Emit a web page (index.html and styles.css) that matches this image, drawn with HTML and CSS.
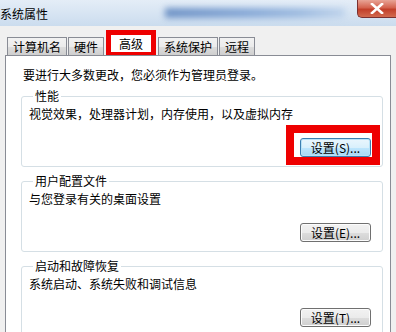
FILE: index.html
```html
<!DOCTYPE html>
<html>
   <head>
      <title>系统属性</title>
      <meta name="viewport" content="width=device-width, initial-scale=1">
      <link rel="stylesheet" href="styles.css">
   </head>
   <body>
      <div class="window">
         <div class="titlebar">
            <div class="title">系统属性</div>
            <div class="blur-text"></div>
            <button class="close-button">
               <svg width="14" height="11" viewBox="0 0 14 11">
                  <path d="M2 1 L12 10 M12 1 L2 10" stroke="#ffffff" stroke-width="2.6" stroke-linecap="square" fill="none"/>
               </svg>
            </button>
         </div>

         <div class="tabs">
            <div class="tab">计算机名</div>
            <div class="tab">硬件</div>
            <div class="tab tab-active"><span>高级</span></div>
            <div class="tab">系统保护</div>
            <div class="tab">远程</div>
         </div>

         <div class="panel">
            <p class="notice">要进行大多数更改，您必须作为管理员登录。</p>

            <fieldset class="group">
               <legend>性能</legend>
               <p class="desc">视觉效果，处理器计划，内存使用，以及虚拟内存</p>
               <div class="actions">
                  <div class="highlight">
                     <button class="btn btn-focus">设置(<u>S</u>)...</button>
                  </div>
               </div>
            </fieldset>

            <fieldset class="group">
               <legend>用户配置文件</legend>
               <p class="desc">与您登录有关的桌面设置</p>
               <div class="actions">
                  <button class="btn">设置(<u>E</u>)...</button>
               </div>
            </fieldset>

            <fieldset class="group">
               <legend>启动和故障恢复</legend>
               <p class="desc">系统启动、系统失败和调试信息</p>
               <div class="actions">
                  <button class="btn">设置(<u>T</u>)...</button>
               </div>
            </fieldset>
         </div>
      </div>
   </body>
</html>
```

FILE: styles.css
```css
body, html {
   margin: 0;
   height: 100%;
   overflow: hidden;
   background: #f0f0f0;
   font-family: "Noto Sans CJK SC", "Liberation Sans", sans-serif;
   font-size: 12px;
   color: #000;
}

.window {
   width: 396px;
   height: 332px;
   display: flex;
   flex-direction: column;
   overflow: hidden;
}

.titlebar {
   height: 26px;
   flex-shrink: 0;
   display: flex;
   align-items: flex-start;
   position: relative;
   background: linear-gradient(180deg, #e4edf7 0%, #d5e3f2 60%, #cbdcee 100%);
}

.title {
   padding-top: 6px;
   line-height: 16px;
   color: #000;
}

.blur-text {
   position: absolute;
   left: 165px;
   top: 8px;
   width: 180px;
   height: 10px;
   background: linear-gradient(90deg, #6f93c6 0%, #86a8d6 45%, #9dbbe0 75%, #c0d4ec 100%);
   filter: blur(3px);
}

.close-button {
   margin-left: auto;
   width: 39px;
   height: 18px;
   padding: 0;
   border: 1px solid #7a3030;
   border-top: none;
   border-right: none;
   border-radius: 0 0 0 5px;
   background: linear-gradient(180deg, #e8a496 0%, #d4634f 45%, #c23f2a 55%, #d26a4f 100%);
   display: flex;
   align-items: center;
   justify-content: center;
   position: relative;
   z-index: 1;
}

.tabs {
   display: flex;
   align-items: flex-end;
   gap: 1px;
   padding: 4px 0 0 7px;
   height: 25px;
   flex-shrink: 0;
}

.tab {
   height: 17px;
   padding: 0 5px;
   line-height: 17px;
   border: 1px solid #898c95;
   border-bottom: none;
   background: linear-gradient(180deg, #f2f2f2 0%, #ebebeb 50%, #dddddd 51%, #cfcfcf 100%);
}

.tab-active {
   height: 15px;
   padding: 2px 0 0;
   line-height: 14px;
   border: 5px solid #ee0000;
   border-bottom: 3px solid #ee0000;
   background: #ffffff;
   width: 40px;
   text-align: center;
   margin: 0 1px;
}

.panel {
   flex: 1;
   margin: 0 5px;
   background: #ffffff;
   border: 1px solid #898c95;
   border-bottom: none;
   padding: 10px 7px 0 15px;
   display: flex;
   flex-direction: column;
   gap: 8px;
}

.notice {
   margin: 0 0 -2px 2px;
   line-height: 18px;
}

.group {
   margin: 0;
   border: 1px solid #d5dfe5;
   border-radius: 3px;
   padding: 0 11px 9px 7px;
   min-width: 0;
}

.group legend {
   padding: 0 2px;
   margin-left: 4px;
   line-height: 12px;
}

.desc {
   margin: 5px 0 0;
   line-height: 14px;
}

.actions {
   display: flex;
   justify-content: flex-end;
   margin-top: 17px;
}

.highlight {
   border: 8px solid #ee0000;
   margin: -13px -9px -8px 0;
   padding: 5px 1px 0 6px;
   display: flex;
}

.btn {
   width: 71px;
   height: 19px;
   padding: 0;
   font-family: inherit;
   font-size: 12px;
   line-height: 16px;
   color: #000;
   border: 1px solid #707070;
   border-radius: 3px;
   background: linear-gradient(180deg, #f2f2f2 0%, #ebebeb 50%, #dddddd 51%, #cfcfcf 100%);
   box-shadow: inset 0 0 0 1px #fcfcfc;
}

.btn u {
   text-decoration: none;
}

.btn-focus {
   border-color: #3c7fb1;
   background: linear-gradient(180deg, #eaf6fd 0%, #d9f0fc 50%, #bee6fd 51%, #a7d9f5 100%);
   box-shadow: inset 0 0 0 1px #b8e3f8;
}
```
